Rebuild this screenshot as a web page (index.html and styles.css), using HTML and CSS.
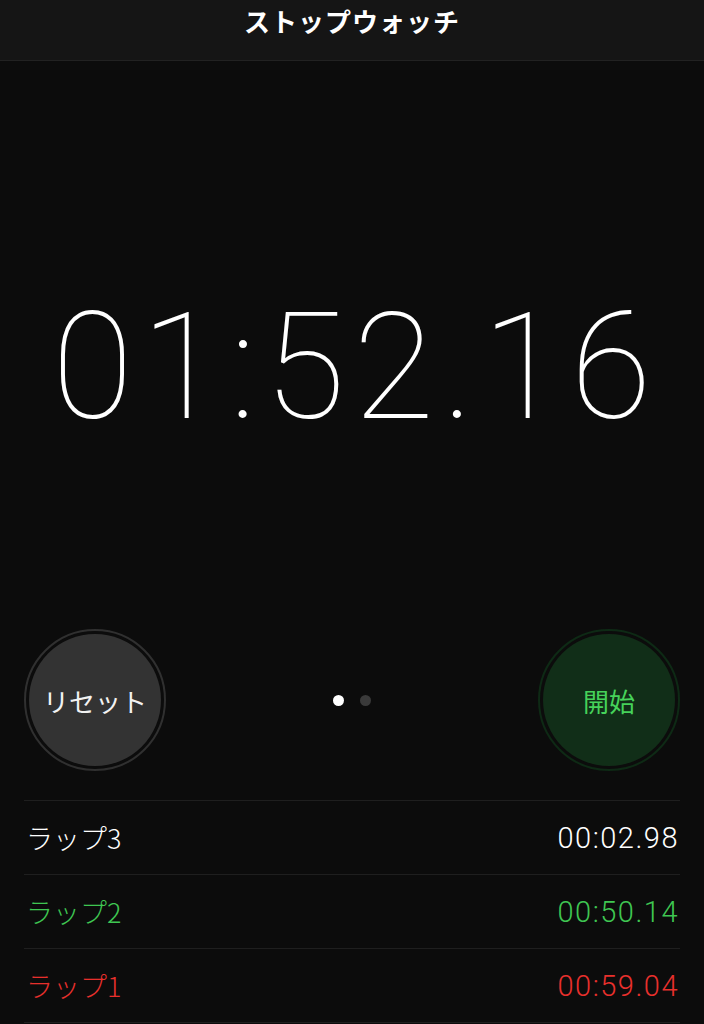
FILE: index.html
```html
<!DOCTYPE html>
<html lang="ja">
<head>
<meta charset="utf-8">
<link rel="stylesheet" href="styles.css">
</head>
<body>
<div class="app">
  <header class="nav"><h1 class="title">ストップウォッチ</h1></header>
  <main class="display"><div class="time">01:52.16</div></main>
  <section class="controls">
    <button class="btn btn-reset"><span>リセット</span></button>
    <div class="dots"><span class="dot on"></span><span class="dot"></span></div>
    <button class="btn btn-start"><span>開始</span></button>
  </section>
  <ul class="laps">
    <li class="lap"><span class="lap-name">ラップ3</span><span class="lap-time">00:02.98</span></li>
    <li class="lap best"><span class="lap-name">ラップ2</span><span class="lap-time">00:50.14</span></li>
    <li class="lap worst"><span class="lap-name">ラップ1</span><span class="lap-time">00:59.04</span></li>
  </ul>
</div>
</body>
</html>
```
FILE: styles.css
```css
* { box-sizing: border-box; }
html, body { margin: 0; padding: 0; background: #0c0c0c; }
body { width: 704px; height: 1024px; overflow: hidden; font-family: Roboto, "Noto Sans CJK JP", sans-serif; color: #fff; }
.app { display: flex; flex-direction: column; height: 1024px; }
.nav { height: 61px; background: #151515; border-bottom: 1px solid #222; display: flex; justify-content: center; padding-top: 3px; flex: none; }
.title { margin: 0; font-family: "Noto Sans CJK JP", sans-serif; font-weight: 700; font-size: 26px; line-height: 36px; color: #fff; letter-spacing: 1px; }
.display { height: 568px; display: flex; align-items: center; justify-content: center; flex: none; }
.time { font-family: Roboto, sans-serif; font-weight: 100; font-size: 148px; line-height: 1; font-variant-numeric: tabular-nums; letter-spacing: 8px; padding-left: 8px; margin-top: 46px; }
.controls { height: 142px; display: flex; align-items: center; justify-content: space-between; padding: 0 24px; flex: none; }
.btn { width: 142px; height: 142px; border-radius: 50%; padding: 3px; background-clip: content-box; display: flex; align-items: center; justify-content: center; font-family: "Noto Sans CJK JP", sans-serif; font-size: 26px; cursor: pointer; }
.btn-reset { border: 2px solid #303030; background-color: #333; color: #f2f2f2; }
.btn-start { border: 2px solid #0e2a15; background-color: #112e18; color: #46d25a; }
.dots { display: flex; gap: 16px; }
.dot { width: 11px; height: 11px; border-radius: 50%; background: #3a3a3a; }
.dot.on { background: #fff; }
.laps { list-style: none; margin: 29px 24px 0; padding: 0; border-top: 1px solid #1f1f1f; }
.lap { height: 74px; display: flex; align-items: center; justify-content: space-between; border-bottom: 1px solid #1f1f1f; padding: 0 1px 0 2px; color: #fff; }
.lap-name { font-family: "Noto Sans CJK JP", sans-serif; font-weight: 300; font-size: 27px; }
.lap-time { font-family: Roboto, sans-serif; font-weight: 300; font-variant-numeric: tabular-nums; font-size: 29px; letter-spacing: 1.5px; }
.lap.best { color: #3fc652; }
.lap.worst { color: #e8302c; }
```
